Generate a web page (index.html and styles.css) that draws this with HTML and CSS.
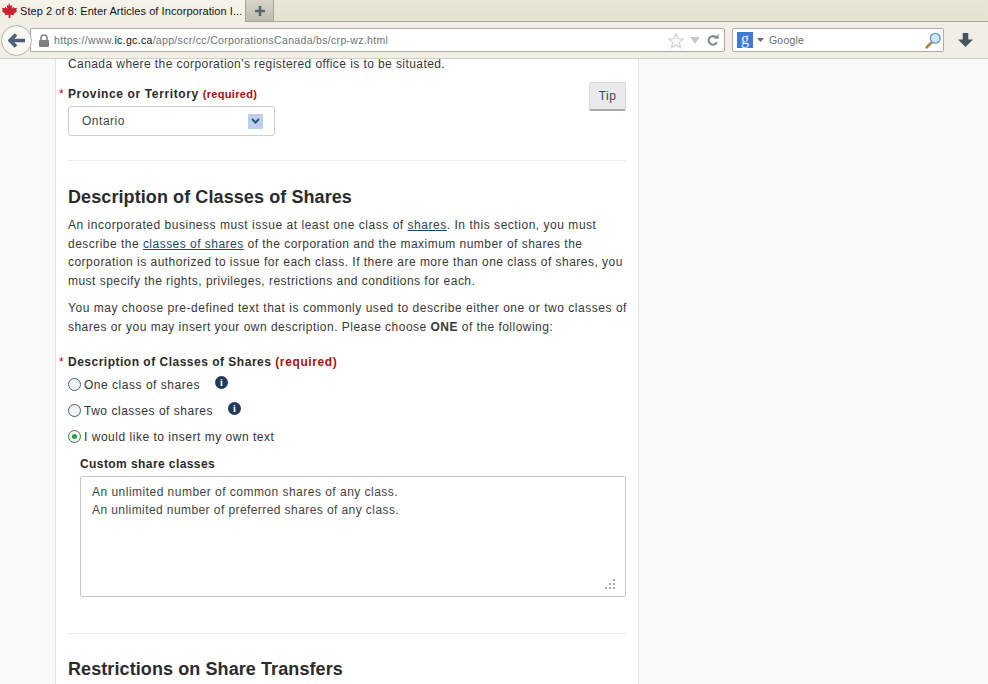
FILE: index.html
```html
<!DOCTYPE html>
<html lang="en">
<head>
<meta charset="utf-8">
<title>Step 2 of 8</title>
<link rel="stylesheet" href="styles.css">
</head>
<body>
<header class="chrome">
  <div class="tabbar">
    <div class="tab">
      <svg class="leaf" width="18" height="16" viewBox="0 0 18 16"><path d="M9 0l1.600 3 1.700-.9-.6 3.600 2-1.900.6 1.400 2.700-.4-.8 2.600 1.100.6-3.600 3 .5 1.300-3.700-.5-.1 3.100H8.600l-.1-3.100-3.700.5.5-1.300-3.600-3 1.100-.6-.8-2.600 2.700.4.600-1.400 2 1.900-.6-3.600 1.700.9z" fill="#c8232c"/></svg>
      <span class="tab-title">Step 2 of 8: Enter Articles of Incorporation I...</span>
    </div>
    <div class="newtab"><svg width="14" height="14" viewBox="0 0 14 14"><path d="M7 2v10M2 7h10" stroke="#59636b" stroke-width="2.600"/></svg></div>
  </div>
  <div class="toolbar">
    <div class="back"><svg width="17" height="15" viewBox="0 0 17 15"><path d="M8 1.500L2 7.500l6 6M3 7.500h14" fill="none" stroke="#4d6079" stroke-width="3.600"/></svg></div>
    <div class="urlbar">
      <svg class="lock" width="12" height="13" viewBox="0 0 12 13"><path d="M3 6V4a3 3 0 0 1 6 0v2" fill="none" stroke="#808080" stroke-width="1.600"/><rect x="1" y="6" width="10" height="7" rx="1" fill="#808080"/></svg>
      <span class="url">https://www.<b>ic.gc.ca</b>/app/scr/cc/CorporationsCanada/bs/crp-wz.html</span>
      <svg class="star" width="18" height="17" viewBox="0 0 20 18"><path d="M10 1.500l2.400 5.300 5.600.6-4.200 3.800 1.200 5.600-5-2.900-5 2.900 1.200-5.600L2 7.400l5.600-.6z" fill="#f8f8f6" stroke="#d0d3cf" stroke-width="1.300"/></svg>
      <svg class="drop" width="10" height="7" viewBox="0 0 11 8"><path d="M0 0h11L5.500 8z" fill="#c2cad0"/></svg>
      <svg class="reload" width="12" height="12" viewBox="0 0 14 14"><path d="M11.500 9.500A5 5 0 1 1 10 3.500" fill="none" stroke="#7b8a93" stroke-width="2.400"/><path d="M8 5.500h5.500V0z" fill="#7b8a93"/></svg>
    </div>
    <div class="searchbar">
      <span class="gicon">g</span>
      <svg class="gdrop" width="7" height="4" viewBox="0 0 7 4"><path d="M0 0h7L3.500 4z" fill="#6a6f75"/></svg>
      <span class="gtext">Google</span>
      <svg class="glass" width="17" height="17" viewBox="0 0 19 19"><path d="M2 17l5-5" stroke="#b5824f" stroke-width="3" stroke-linecap="round"/><circle cx="11.500" cy="7" r="5.500" fill="#cfe8f6" stroke="#5f9cc4" stroke-width="1.500"/></svg>
    </div>
    <svg class="download" width="15" height="14" viewBox="0 0 16 15"><path d="M5 0h6v7h5l-8 8-8-8h5z" fill="#47545e"/></svg>
  </div>
</header>
<main class="page">
  <div class="column">
    <p class="intro">Canada where the corporation's registered office is to be situated.</p>

    <div class="province">
      <div class="province-fields">
        <div class="label"><span class="star-req">*</span>Province or Territory <span class="req small">(required)</span></div>
        <div class="select"><span>Ontario</span><span class="select-arrow"><svg width="9" height="6" viewBox="0 0 9 6"><path d="M1 1l3.500 3.500L8 1" fill="none" stroke="#33527f" stroke-width="2"/></svg></span></div>
      </div>
      <button class="tip" type="button">Tip</button>
    </div>

    <hr class="rule rule-a">

    <h2>Description of Classes of Shares</h2>
    <p class="para"><span class="wide">An incorporated business must issue at least one class of <a href="#">shares</a>. In this section, you must</span><br>describe the <a href="#">classes of shares</a> of the corporation and the maximum number of shares the<br>corporation is authorized to issue for each class. If there are more than one class of shares, you<br>must specify the rights, privileges, restrictions and conditions for each.</p>
    <p class="para para2"><span class="wide">You may choose pre-defined text that is commonly used to describe either one or two classes of</span><br>shares or you may insert your own description. Please choose <b>ONE</b> of the following:</p>

    <div class="label label2"><span class="star-req">*</span>Description of Classes of Shares <span class="req">(required)</span></div>
    <ul class="radios">
      <li><span class="radio"></span>One class of shares<span class="info">i</span></li>
      <li><span class="radio"></span>Two classes of shares<span class="info">i</span></li>
      <li><span class="radio on"></span>I would like to insert my own text</li>
    </ul>
    <div class="custom">
      <div class="custom-label">Custom share classes</div>
      <div class="textarea"><span class="ta-one">An unlimited number of common shares of any class.</span><br>An unlimited number of preferred shares of any class.
        <svg class="grip" width="12" height="12" viewBox="0 0 12 12"><g fill="#a8a8a8"><rect x="9" y="1" width="2" height="2"/><rect x="5" y="5" width="2" height="2"/><rect x="9" y="5" width="2" height="2"/><rect x="1" y="9" width="2" height="2"/><rect x="5" y="9" width="2" height="2"/><rect x="9" y="9" width="2" height="2"/></g></svg>
      </div>
    </div>

    <hr class="rule rule-b">
    <h2 class="h2b">Restrictions on Share Transfers</h2>
  </div>
</main>
</body>
</html>
```
FILE: styles.css
```css
* { box-sizing: border-box; }
html, body { margin: 0; height: 100%; overflow: hidden; }
body {
  width: 988px; height: 684px; background: #f9f9f9; color: #383838;
  font-family: "Liberation Sans", Arial, sans-serif; font-size: 12px;
  display: flex; flex-direction: column;
}
.chrome { flex: none; height: 59px; position: relative; z-index: 2; }
.tabbar {
  height: 22px; background: linear-gradient(#eae7d9, #e6e2d1);
  border-bottom: 1px solid #a8a898; display: flex; align-items: stretch;
}
.tab {
  width: 245px; height: 22px; background: linear-gradient(#f5f3ea, #f1efe4);
  display: flex; align-items: center; color: #111; font-size: 11px; padding-left: 0; letter-spacing: .07px; white-space: nowrap;
}
.leaf { flex: none; margin-right: 2px; }
.newtab {
  width: 29px; height: 22px; background: linear-gradient(#d6d5c8, #bdbcae);
  border: 1px solid #a5a596; border-top: 0;
  display: flex; align-items: center; justify-content: center;
}
.toolbar {
  height: 37px; background: #f1efe5; border-bottom: 1px solid #d2d1c6;
  display: flex; align-items: center; padding-left: 1px;
}
.back {
  width: 31px; height: 31px; border-radius: 50%; background: #f7f7f4; border: 1px solid #b5b4a8;
  display: flex; align-items: center; justify-content: center; flex: none; position: relative; z-index: 1;
}
.urlbar {
  width: 695px; height: 24px; margin-left: -2px; background: #fff; border: 1px solid #aeada0; border-radius: 0 2px 2px 0;
  display: flex; align-items: center; padding-left: 7px; flex: none;
}
.lock { flex: none; margin-right: 4px; }
.url { font-size: 10.500px; color: #6b7278; flex: 1; letter-spacing: .32px; white-space: nowrap; }
.url b { font-weight: 400; color: #111; }
.star { flex: none; margin-right: 5px; }
.drop { flex: none; margin-right: 7px; }
.reload { flex: none; margin-right: 5px; }
.searchbar {
  width: 212px; height: 24px; margin-left: 7px; background: #fff; border: 1px solid #aeada0; border-radius: 2px;
  display: flex; align-items: center; padding-left: 4px; flex: none;
}
.gicon {
  width: 16px; height: 16px; background: #3f79d6; color: #e9f1fb; font: 16px/14px "Liberation Serif", serif;
  text-align: center; flex: none;
}
.gdrop { margin: 0 5px 0 4px; flex: none; }
.gtext { flex: 1; color: #6a6a6a; font-size: 10.500px; letter-spacing: .2px; }
.glass { flex: none; margin-right: 1px; }
.download { margin-left: 14px; flex: none; }

.page { flex: 1; min-height: 0; overflow: hidden; }
.column {
  display: flow-root;
  width: 584px; margin-left: 55px; padding: 0 12px; height: 100%; background: #fff;
  border-left: 1px solid #e4e4e4; border-right: 1px solid #e4e4e4;
  letter-spacing: .52px;
}
.intro { margin: -4px 0 0; line-height: 18px; white-space: nowrap; letter-spacing: .42px; }
.province { display: flex; justify-content: space-between; align-items: flex-start; margin-top: 14px; }
.province-fields { width: 207px; }
.label { font-weight: 700; color: #2b2b2b; position: relative; line-height: 15px; letter-spacing: .62px; }
.star-req { position: absolute; left: -9px; top: 0; color: #a02020; font-weight: 400; }
.req { color: #a80f0f; }
.small { font-size: 11px; letter-spacing: .3px; }
.select {
  height: 30px; margin-top: 4px; border: 1px solid #cfcfcf; border-radius: 3px;
  display: flex; align-items: center; justify-content: space-between; padding: 0 11px 0 13px; color: #444;
}
.select-arrow {
  width: 15px; height: 15px; background: #bcd0ee; display: flex; align-items: center; justify-content: center;
}
.tip {
  width: 37px; height: 29px; margin-top: -5px; background: #e9eaec; border: 1px solid #d9d9d9; border-bottom: 2px solid #a9a9a9;
  border-radius: 2px; font: 12px "Liberation Sans", Arial, sans-serif; color: #3c4654; padding: 0; letter-spacing: .4px;
}
.rule { border: 0; border-top: 1px solid #ececec; margin: 0; }
.rule-a { margin-top: 24px; }
h2 { margin: 18px 0 0; font-size: 18px; line-height: 36px; height: 36px; font-weight: 700; color: #2b2b2b; letter-spacing: .09px; }
.para { margin: 1px 0 0; line-height: 18.500px; white-space: nowrap; letter-spacing: .475px; }
.wide { letter-spacing: .53px; }
.para2 { margin-top: 9px; }
.para a { color: #174a6e; }
.label2 { margin-top: 19px; letter-spacing: .5px; }
.label2 .req { letter-spacing: .62px; }
.radios { list-style: none; margin: 2px 0 0; padding: 0; }
.radios li { display: flex; align-items: center; height: 26px; color: #333; }
.radio {
  width: 13px; height: 13px; border-radius: 50%; border: 1px solid #47617d; background: #f1f3f4; margin: 0 3px 1px 0; flex: none; position: relative;
}
.radio.on { border-color: #3a7d4c; }
.radio.on::after { content: ""; position: absolute; left: 3px; top: 3px; width: 5px; height: 5px; border-radius: 50%; background: #2e9e4a; }
.info {
  width: 13px; height: 13px; border-radius: 50%; background: #203a5c; color: #fff; font: 700 10px/13px "Liberation Serif", serif; text-align: center; margin: -6px 0 0 15px; letter-spacing: 0;
}
.custom { margin: 0 0 0 12px; }
.custom-label { font-weight: 700; line-height: 16px; margin-top: 6px; letter-spacing: .42px; color: #2b2b2b; }
.textarea {
  position: relative; height: 121px; margin-top: 4px; border: 1px solid #c8c8c8; border-radius: 2px; padding: 6px 11px;
  line-height: 18px; color: #444; white-space: nowrap; letter-spacing: .42px;
}
.ta-one { letter-spacing: .48px; }
.grip { position: absolute; right: 9px; bottom: 6px; }
.rule-b { margin-top: 36px; }
.h2b { margin-top: 17px; }
```
